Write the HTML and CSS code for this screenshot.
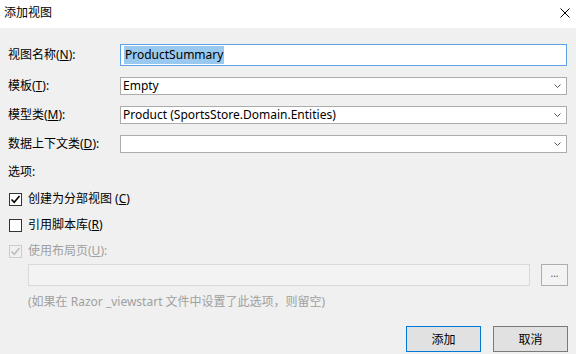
FILE: index.html
```html
<!DOCTYPE html>
<html>
<head>
  <meta charset="utf-8">
  <title>添加视图</title>
  <link rel="stylesheet" href="styles.css">
</head>
<body>
  <div class="dialog">

    <!-- Window caption -->
    <div class="titlebar">
      <span class="title">添加视图</span>
      <svg class="close" width="10" height="10" viewBox="0 0 10 10">
        <path d="M0.5 0.5 L9.5 9.5 M9.5 0.5 L0.5 9.5" stroke="#000" stroke-width="1" fill="none"/>
      </svg>
    </div>

    <div class="content">

      <!-- Main fields -->
      <div class="fields">
        <label class="field-label">视图名称(<u>N</u>):</label>
        <div class="textbox focused"><span class="selected">ProductSummary</span></div>

        <label class="field-label">模板(<u>T</u>):</label>
        <div class="combo">
          <span>Empty</span>
          <svg class="chevron" width="7" height="4" viewBox="0 0 7 4"><path d="M0.5 0.5 L3.5 3.5 L6.5 0.5" stroke="#555" fill="none"/></svg>
        </div>

        <label class="field-label">模型类(<u>M</u>):</label>
        <div class="combo">
          <span>Product (SportsStore.Domain.Entities)</span>
          <svg class="chevron" width="7" height="4" viewBox="0 0 7 4"><path d="M0.5 0.5 L3.5 3.5 L6.5 0.5" stroke="#555" fill="none"/></svg>
        </div>

        <label class="field-label">数据上下文类(<u>D</u>):</label>
        <div class="combo">
          <span></span>
          <svg class="chevron" width="7" height="4" viewBox="0 0 7 4"><path d="M0.5 0.5 L3.5 3.5 L6.5 0.5" stroke="#555" fill="none"/></svg>
        </div>
      </div>

      <!-- Options -->
      <div class="options-title">选项:</div>
      <div class="checks">
        <div class="check-row">
          <span class="checkbox">
            <svg width="11" height="11" viewBox="0 0 11 11"><path d="M1.5 5.5 L4.2 8.3 L9.5 2" stroke="#000" stroke-width="1.6" fill="none"/></svg>
          </span>
          <span>创建为分部视图 (<u>C</u>)</span>
        </div>
        <div class="check-row">
          <span class="checkbox"></span>
          <span>引用脚本库(<u>R</u>)</span>
        </div>
        <div class="check-row disabled">
          <span class="checkbox">
            <svg width="11" height="11" viewBox="0 0 11 11"><path d="M1.5 5.5 L4.2 8.3 L9.5 2" stroke="#bcbcbc" stroke-width="1.6" fill="none"/></svg>
          </span>
          <span>使用布局页(<u>U</u>):</span>
        </div>
      </div>

      <div class="layout-row">
        <div class="textbox disabled-box"></div>
        <button class="browse">...</button>
      </div>
      <div class="hint">(如果在 Razor _viewstart 文件中设置了此选项，则留空)</div>

      <!-- Dialog buttons -->
      <div class="actions">
        <button class="btn default">添加</button>
        <button class="btn">取消</button>
      </div>
    </div>
  </div>
</body>
</html>
```

FILE: styles.css
```css
body {
  margin: 0;
  background-color: #f0f0f0;
  font-family: "Noto Sans", "Noto Sans CJK SC", sans-serif;
  font-size: 12px;
  color: #000;
}
.dialog {
  width: 576px;
  height: 354px;
  display: flex;
  flex-direction: column;
}
.titlebar {
  height: 28px;
  background: #fff;
  display: flex;
  align-items: center;
  justify-content: space-between;
  padding: 0 6px 2px 4px;
  box-sizing: border-box;
}
.title {
  font-size: 12px;
  line-height: 16px;
}
.close {
  display: block;
}
.content {
  padding: 16px 8px 0 8px;
}
.fields {
  display: grid;
  grid-template-columns: 112px 1fr;
  grid-template-rows: 22px 18px 18px 18px;
  row-gap: 11px;
  align-items: center;
  margin-right: 1px;
}
.field-label {
  line-height: 16px;
}
.textbox {
  height: 22px;
  box-sizing: border-box;
  border: 1px solid #acacac;
  background: #fff;
  display: flex;
  align-items: center;
  padding: 0 3px;
}
.textbox.focused {
  border-color: #5ba2e6;
}
.selected {
  background: #99c9ef;
  line-height: 18px;
  padding: 0 1px;
}
.combo {
  height: 18px;
  box-sizing: border-box;
  border: 1px solid #acacac;
  background: #fff;
  display: flex;
  align-items: center;
  justify-content: space-between;
  padding: 0 5px 0 2px;
  line-height: 16px;
}
.chevron {
  display: block;
}
.options-title {
  margin-top: 11px;
  line-height: 16px;
}
.checks {
  margin-top: 6px;
}
.check-row {
  height: 26px;
  display: flex;
  align-items: center;
  gap: 6px;
  padding-left: 1px;
  line-height: 16px;
}
.checkbox {
  width: 13px;
  height: 13px;
  box-sizing: border-box;
  border: 1px solid #333;
  background: #fff;
  display: flex;
  align-items: center;
  justify-content: center;
}
.check-row.disabled {
  color: #a0a0a0;
}
.check-row.disabled .checkbox {
  border-color: #cccccc;
  background: #f0f0f0;
}
.layout-row {
  display: flex;
  gap: 11px;
  padding-left: 20px;
}
.disabled-box {
  width: 502px;
  flex-shrink: 0;
  background: #f3f3f3;
  border-color: #d9d9d9;
}
.browse {
  width: 27px;
  height: 22px;
  flex-shrink: 0;
  box-sizing: border-box;
  border: 1px solid #adadad;
  background: #f3f3f3;
  font-family: inherit;
  font-size: 10px;
  padding: 0 0 4px;
  color: #555;
}
.hint {
  margin-top: 8px;
  padding-left: 20px;
  line-height: 16px;
  color: #a0a0a0;
}
.actions {
  margin-top: 16px;
  display: flex;
  justify-content: flex-end;
  gap: 12px;
}
.btn {
  width: 75px;
  height: 26px;
  box-sizing: border-box;
  border: 1px solid #7a7a7a;
  background: #e1e1e1;
  font-family: inherit;
  font-size: 12px;
  color: #000;
  padding: 0;
}
.btn.default {
  border-color: #0078d7;
}
```
